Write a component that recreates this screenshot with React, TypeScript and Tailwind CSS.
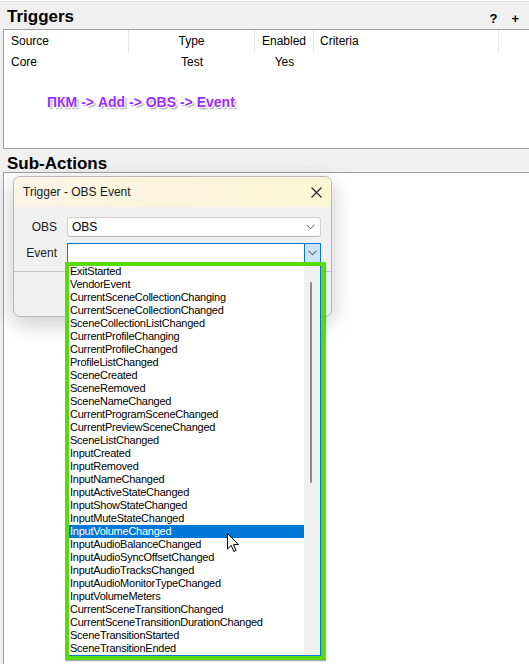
import React from "react";

const items = [
  "ExitStarted",
  "VendorEvent",
  "CurrentSceneCollectionChanging",
  "CurrentSceneCollectionChanged",
  "SceneCollectionListChanged",
  "CurrentProfileChanging",
  "CurrentProfileChanged",
  "ProfileListChanged",
  "SceneCreated",
  "SceneRemoved",
  "SceneNameChanged",
  "CurrentProgramSceneChanged",
  "CurrentPreviewSceneChanged",
  "SceneListChanged",
  "InputCreated",
  "InputRemoved",
  "InputNameChanged",
  "InputActiveStateChanged",
  "InputShowStateChanged",
  "InputMuteStateChanged",
  "InputVolumeChanged",
  "InputAudioBalanceChanged",
  "InputAudioSyncOffsetChanged",
  "InputAudioTracksChanged",
  "InputAudioMonitorTypeChanged",
  "InputVolumeMeters",
  "CurrentSceneTransitionChanged",
  "CurrentSceneTransitionDurationChanged",
  "SceneTransitionStarted",
  "SceneTransitionEnded",
];

function Chevron({ color = "#555" }: { color?: string }) {
  return (
    <svg width="9" height="6" viewBox="0 0 9 6" fill="none">
      <path d="M0.5 0.8 L4.5 4.8 L8.5 0.8" stroke={color} strokeWidth="1" />
    </svg>
  );
}

export default function App() {
  return (
    <div className="relative w-[529px] h-[664px] overflow-hidden bg-[#f0f0f0] flex flex-col text-black font-['Liberation_Sans',Arial,sans-serif]">
      <div className="h-[1px] bg-white" />
      <div className="h-[1px] bg-[#e2e2e2]" />
      {/* Triggers header */}
      <div className="h-[27px] flex justify-between pl-[7px] pr-[10px]">
        <div className="mt-[6px] text-[17px] leading-[17px] font-bold">Triggers</div>
        <div className="mt-[10px] flex gap-[14px] text-[13px] leading-[13px] font-bold">
          <span>?</span>
          <span>+</span>
        </div>
      </div>
      {/* Triggers list */}
      <div className="ml-[3px] h-[120px] border-l border-t border-b border-[#a0a0a0] bg-white flex flex-col text-[12px]">
        <div className="h-[22px] flex items-center">
          <div className="w-[125px] h-full flex items-center pl-[7px] border-r border-[#e5e5e5]">Source</div>
          <div className="w-[126px] h-full flex items-center justify-center border-r border-[#e5e5e5]">Type</div>
          <div className="w-[59px] h-full flex items-center justify-center border-r border-[#e5e5e5]">Enabled</div>
          <div className="w-[185px] h-full flex items-center pl-[6px] border-r border-[#e5e5e5]">Criteria</div>
          <div className="flex-1" />
        </div>
        <div className="h-[20px] flex items-center">
          <div className="w-[125px] pl-[7px]">Core</div>
          <div className="w-[126px] text-center">Test</div>
          <div className="w-[59px] text-center">Yes</div>
        </div>
        <div className="mt-[21px] pl-[43px] text-[14px] leading-[18px] font-bold text-[#9b2cff] [text-shadow:1px_0_0_#fff,-1px_0_0_#fff,0_1px_0_#fff,0_-1px_0_#fff,1px_1px_0_#fff,2px_2px_2px_rgba(0,0,0,0.45)]">
          ПКМ -&gt; Add -&gt; OBS -&gt; Event
        </div>
      </div>
      {/* Sub-Actions header */}
      <div className="h-[23px] pl-[7px]">
        <div className="mt-[6px] text-[17px] leading-[17px] font-bold">Sub-Actions</div>
      </div>
      <div className="flex-1 ml-[3px] border-l border-t border-[#a0a0a0] bg-white" />

      {/* Dialog */}
      <div className="absolute left-[13px] top-[176px] w-[319px] h-[141px] rounded-[7px] border border-[#b9b9b9] bg-[#f0f0f0] shadow-[0_6px_22px_rgba(0,0,0,0.22)] overflow-hidden flex flex-col text-[12px]">
        <div className="h-[30px] shrink-0 bg-gradient-to-r from-[#fcf4e6] to-[#f9f7d3] flex items-center justify-between pl-[9px] pr-[9px] text-[#1a1a1a]">
          <span>Trigger - OBS Event</span>
          <svg width="11" height="11" viewBox="0 0 11 11">
            <path d="M0.5 0.5 L10.5 10.5 M10.5 0.5 L0.5 10.5" stroke="#222" strokeWidth="1.1" />
          </svg>
        </div>
        <div className="pt-[10px] flex flex-col">
          <div className="flex items-center h-[20px]">
            <div className="w-[43px] text-right text-[#222]">OBS</div>
            <div className="ml-[10px] w-[254px] h-[20px] bg-white border border-[#d0d0d0] border-b-[#b8b8b8] rounded-[3px] flex items-center justify-between pl-[4px] pr-[5px]">
              <span>OBS</span>
              <Chevron />
            </div>
          </div>
          <div className="flex items-center h-[20px] mt-[6px]">
            <div className="w-[43px] text-right text-[#222]">Event</div>
            <div className="ml-[10px] w-[254px] h-[20px] bg-white border border-[#0078d7] flex items-stretch justify-end">
              <div className="w-[16px] bg-[#cce4f7] border-l border-[#0078d7] flex items-center justify-center">
                <Chevron color="#333" />
              </div>
            </div>
          </div>
          <div className="mt-[8px] border-t border-[#c6c6c6]" />
        </div>
      </div>

      {/* Dropdown list */}
      <div className="absolute left-[67px] top-[263px] w-[254px] h-[393px] border border-[#0078d7] bg-white flex">
        <div className="flex-1 pt-[1px] flex flex-col">
          {items.map((it) => {
            const sel = it === "InputVolumeChanged";
            return (
              <div
                key={it}
                className={
                  sel
                    ? "h-[13px] leading-[13px] pl-[2px] text-[11px] tracking-[-0.25px] bg-[#0078d7] text-white whitespace-nowrap"
                    : "h-[13px] leading-[13px] pl-[2px] text-[11px] tracking-[-0.25px] text-black whitespace-nowrap"
                }
              >
                {it}
              </div>
            );
          })}
        </div>
        <div className="w-[16px] bg-[#f0f0f0] flex flex-col">
          <div className="mt-[18px] ml-[6px] w-[2px] h-[201px] bg-[#8a8a8a] rounded-full" />
        </div>
      </div>

      {/* Green annotation frame */}
      <div className="absolute left-[65px] top-[262px] w-[260px] h-[398px] border-4 border-[#56dc0c] shadow-[1px_1px_1px_rgba(0,0,0,0.35)] pointer-events-none" />

      {/* Cursor */}
      <svg className="absolute left-[227px] top-[533px]" width="13" height="20" viewBox="0 0 13 20">
        <path d="M0.5 0.5 L0.5 16 L4.2 12.4 L6.8 18.5 L9 17.5 L6.5 11.6 L11.5 11.6 Z" fill="#fff" stroke="#000" strokeWidth="1" strokeLinejoin="round" />
      </svg>
    </div>
  );
}
